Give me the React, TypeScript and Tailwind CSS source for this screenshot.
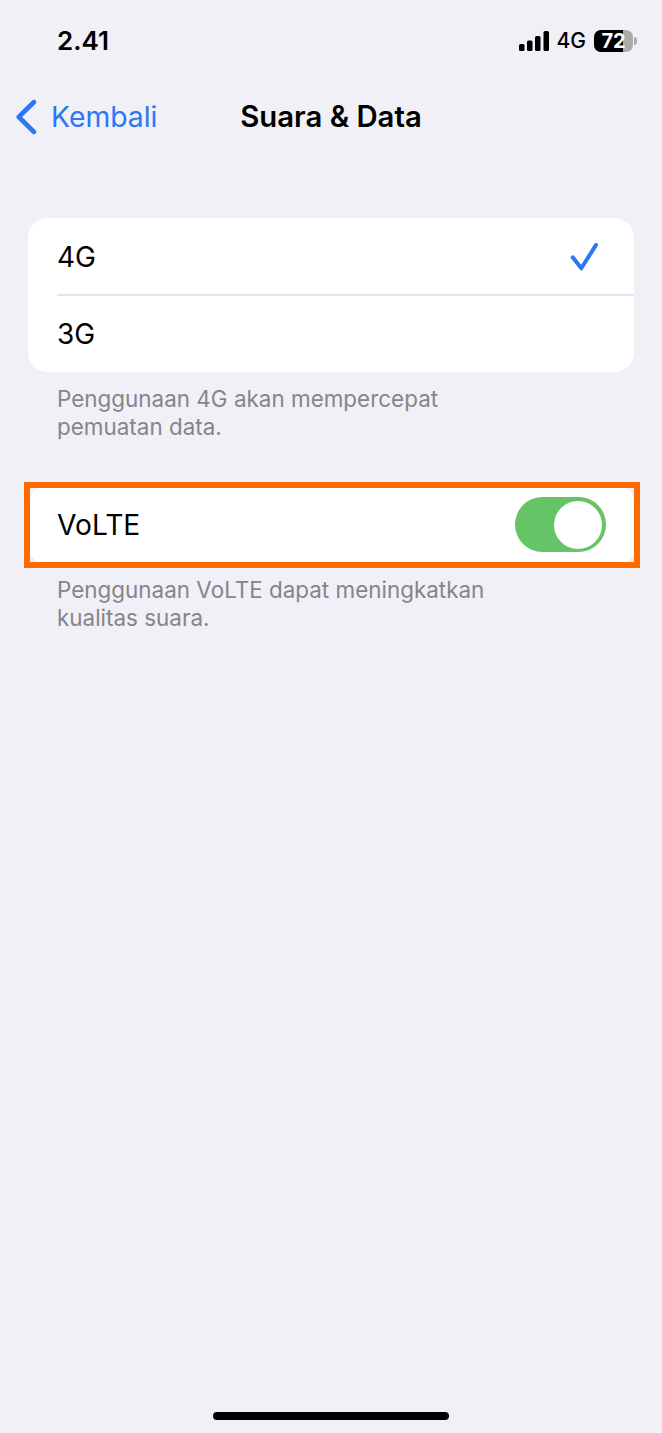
export default function App() {
  return (
    <div className="w-[662px] h-[1433px] bg-[#f1f0f6] flex flex-col text-black overflow-hidden" style={{ fontFamily: 'Inter, "Liberation Sans", sans-serif' }}>
      <div className="h-[80px] flex items-center justify-between pl-[57px] pr-[25px] shrink-0">
        <span className="text-[26px] font-semibold">2.41</span>
        <div className="flex items-center mt-[2px]">
          <svg width="31" height="20" viewBox="0 0 31 20" fill="#000">
            <rect x="0" y="13" width="5.5" height="7" rx="1.5" />
            <rect x="8" y="9.5" width="5.5" height="10.5" rx="1.5" />
            <rect x="16" y="5" width="5.5" height="15" rx="1.5" />
            <rect x="24.5" y="0" width="5.5" height="20" rx="1.5" />
          </svg>
          <span className="text-[21px] font-medium ml-[7px]">4G</span>
          <div className="ml-[8px] w-[39px] h-[22px] rounded-[7px] bg-[#ababab] relative overflow-hidden flex items-center justify-center">
            <div className="absolute left-0 top-0 bottom-0 w-[29px] bg-black" />
            <span className="relative text-white text-[20px] font-bold leading-none">72</span>
          </div>
          <div className="w-[3px] h-[8px] bg-[#ababab] rounded-r-[3px] ml-[1px]" />
        </div>
      </div>
      <div className="h-[74px] grid grid-cols-3 items-center shrink-0">
        <div className="flex items-center pl-[16px] text-[#2b77f6]">
          <svg width="22" height="36" viewBox="0 0 22 36" fill="none" stroke="#2b77f6" strokeWidth="4.6" strokeLinecap="round" strokeLinejoin="round">
            <path d="M18 3 L2.8 18 L18 33" />
          </svg>
          <span className="text-[28.3px] ml-[13px]">Kembali</span>
        </div>
        <div className="text-center text-[29.3px] font-semibold whitespace-nowrap">Suara &amp; Data</div>
        <div />
      </div>
      <div className="mt-[64px] mx-[28px] bg-white rounded-[20px] shrink-0">
        <div className="h-[76px] flex items-center justify-between pt-[2px] pl-[29px] pr-[34px]">
          <span className="text-[28px]">4G</span>
          <svg width="30" height="30" viewBox="0 0 30 30" fill="none" stroke="#2b77f6" strokeWidth="4" strokeLinecap="round" strokeLinejoin="round">
            <path d="M2.7 15.3 L11.3 26.3 L26 3" />
          </svg>
        </div>
        <div className="ml-[29px] h-[2px] bg-[#e6e6ea]" />
        <div className="h-[76px] flex items-center pl-[29px]">
          <span className="text-[28px]">3G</span>
        </div>
      </div>
      <p className="mt-[13px] ml-[57px] w-[470px] text-[22.45px] leading-[28px] text-[#85858a] shrink-0">
        Penggunaan 4G akan mempercepat pemuatan data.
      </p>
      <div className="mt-[41px] ml-[24px] w-[616px] h-[86px] border-[6px] border-[#ff6a00] bg-[#f1f0f6] shrink-0">
        <div className="h-full bg-white rounded-[12px] flex items-center justify-between pl-[27px] pr-[28px]">
          <span className="text-[28.2px]">VoLTE</span>
          <div className="w-[91px] h-[55px] mb-[1px] rounded-full bg-[#65c466] flex items-center justify-end pr-[4px]">
            <div className="w-[48px] h-[48px] rounded-full bg-white" />
          </div>
        </div>
      </div>
      <p className="mt-[8px] ml-[57px] w-[470px] text-[22.45px] leading-[28px] text-[#85858a] shrink-0">
        Penggunaan VoLTE dapat meningkatkan kualitas suara.
      </p>
      <div className="mt-auto mb-[13px] mx-auto w-[236px] h-[8px] rounded-full bg-black" />
    </div>
  );
}
